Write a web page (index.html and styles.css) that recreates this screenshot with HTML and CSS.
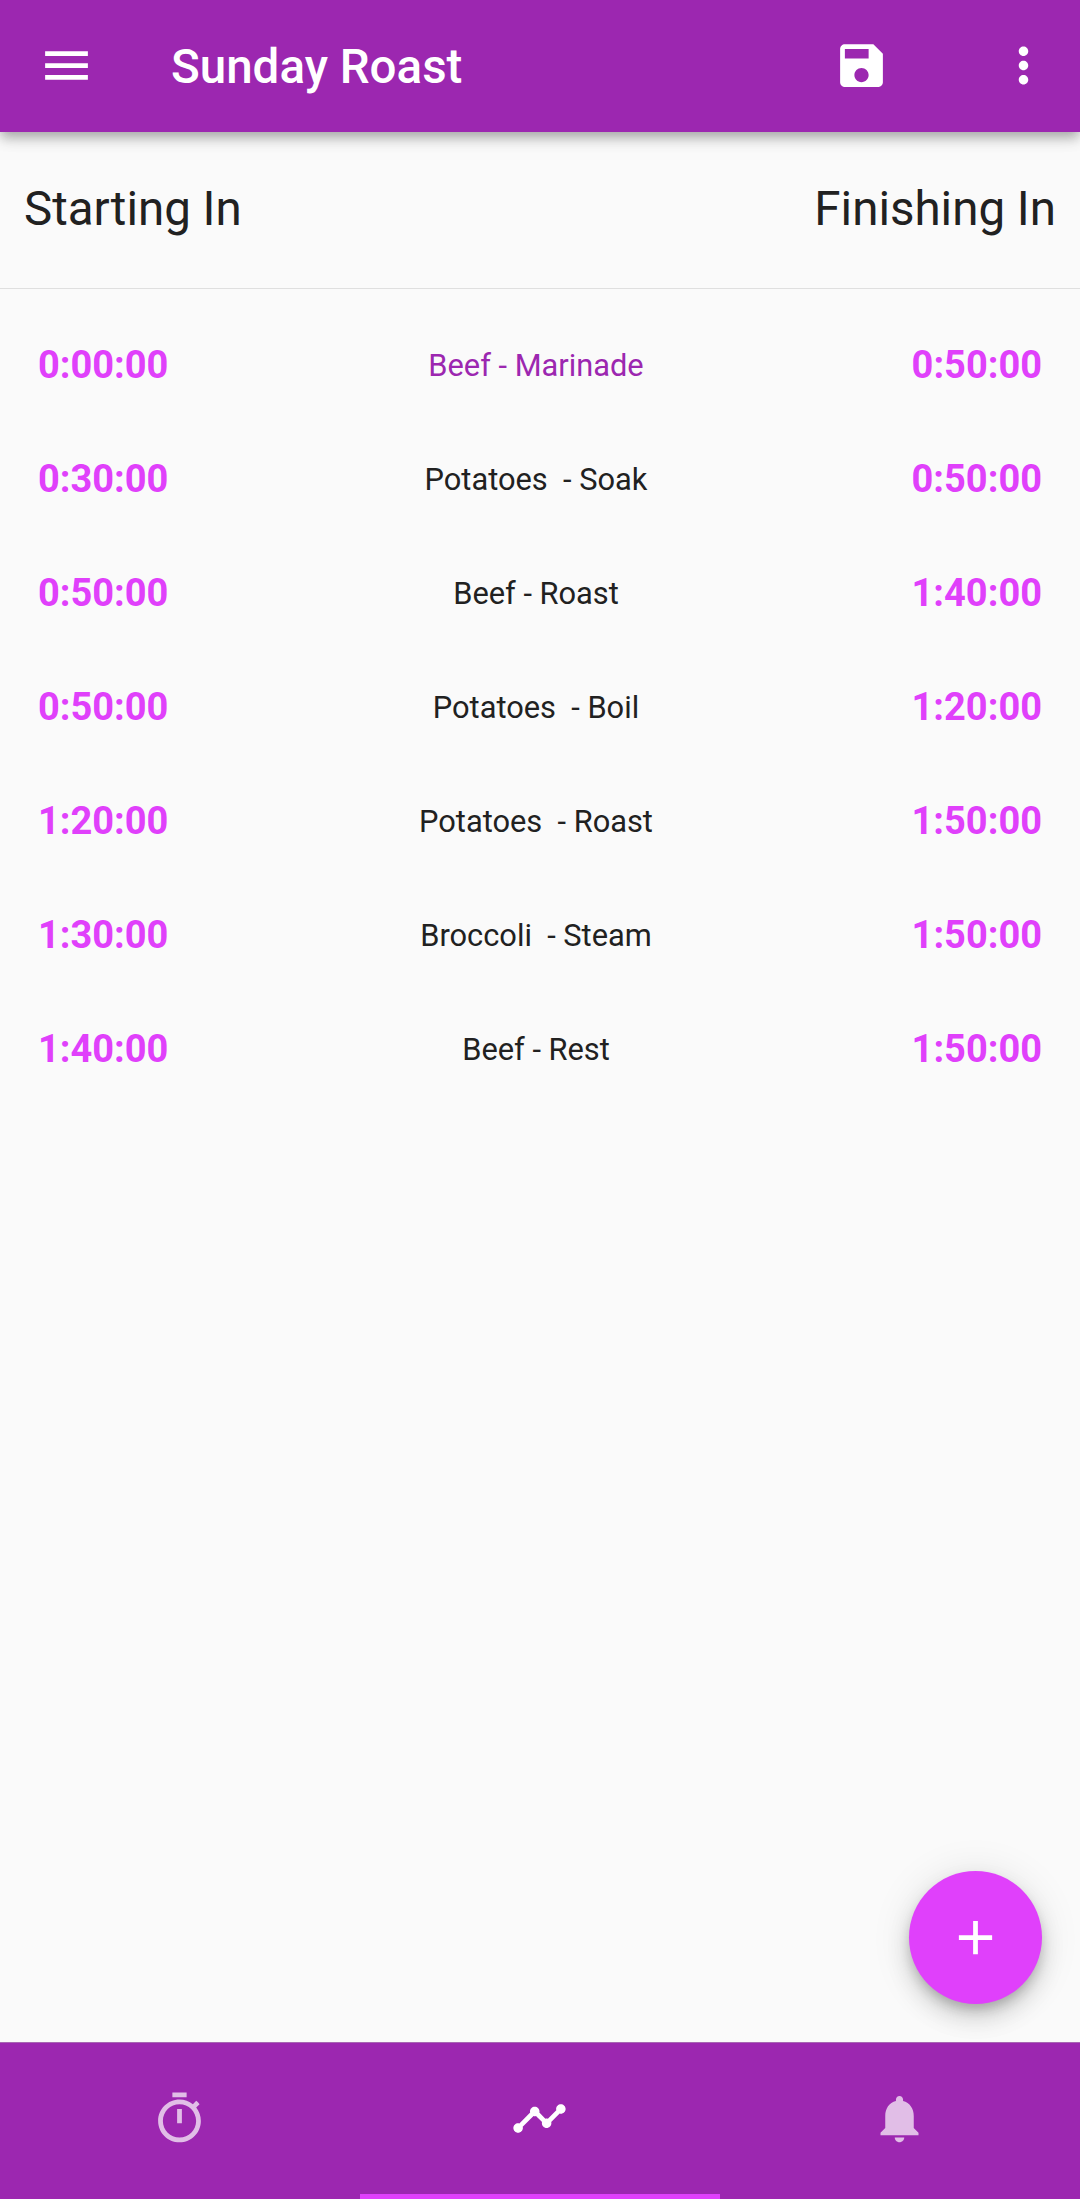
FILE: index.html
```html
<!DOCTYPE html>
<html lang="en">
<head>
<meta charset="utf-8">
<title>Sunday Roast</title>
<link rel="stylesheet" href="styles.css">
</head>
<body>
<div class="app">
  <header class="bar">
    <svg class="icon menu" viewBox="0 0 24 24"><path d="M3 18h18v-2H3v2zm0-5h18v-2H3v2zm0-7v2h18V6H3z"/></svg>
    <h1 class="title">Sunday Roast</h1>
    <svg class="icon save" viewBox="0 0 24 24"><path d="M17 3H5c-1.11 0-2 .9-2 2v14c0 1.1.89 2 2 2h14c1.1 0 2-.9 2-2V7l-4-4zm-5 16c-1.66 0-3-1.34-3-3s1.34-3 3-3 3 1.34 3 3-1.34 3-3 3zm3-10H5V5h10v4z"/></svg>
    <svg class="icon more" viewBox="0 0 24 24"><path d="M12 8c1.1 0 2-.9 2-2s-.9-2-2-2-2 .9-2 2 .9 2 2 2zm0 2c-1.1 0-2 .9-2 2s.9 2 2 2 2-.9 2-2-.9-2-2-2zm0 6c-1.1 0-2 .9-2 2s.9 2 2 2 2-.9 2-2-.9-2-2-2z"/></svg>
  </header>
  <main class="content">
    <div class="heads"><span>Starting In</span><span>Finishing In</span></div>
    <ul class="steps">
      <li class="step"><b>0:00:00</b><span class="name current">Beef - Marinade</span><b>0:50:00</b></li>
      <li class="step"><b>0:30:00</b><span class="name">Potatoes  - Soak</span><b>0:50:00</b></li>
      <li class="step"><b>0:50:00</b><span class="name">Beef - Roast</span><b>1:40:00</b></li>
      <li class="step"><b>0:50:00</b><span class="name">Potatoes  - Boil</span><b>1:20:00</b></li>
      <li class="step"><b>1:20:00</b><span class="name">Potatoes  - Roast</span><b>1:50:00</b></li>
      <li class="step"><b>1:30:00</b><span class="name">Broccoli  - Steam</span><b>1:50:00</b></li>
      <li class="step"><b>1:40:00</b><span class="name">Beef - Rest</span><b>1:50:00</b></li>
    </ul>
    <button class="fab" aria-label="Add"><svg class="icon" viewBox="0 0 24 24"><path d="M19 13h-6v6h-2v-6H5v-2h6V5h2v6h6v2z"/></svg></button>
  </main>
  <nav class="tabs">
    <a class="tab"><svg class="icon" viewBox="0 0 24 24"><path d="M15 1H9v2h6V1zm-4 13h2V8h-2v6zm8.03-6.61l1.42-1.42c-.43-.51-.9-.99-1.41-1.41l-1.42 1.42C16.07 4.74 14.12 4 12 4c-4.97 0-9 4.03-9 9s4.02 9 9 9 9-4.03 9-9c0-2.12-.74-4.07-1.97-5.61zM12 20c-3.87 0-7-3.13-7-7s3.13-7 7-7 7 3.13 7 7-3.13 7-7 7z"/></svg></a>
    <a class="tab active"><svg class="icon" viewBox="0 0 24 24"><path d="M23 8c0 1.1-.9 2-2 2-.18 0-.35-.02-.51-.07l-3.56 3.55c.05.16.07.34.07.52 0 1.1-.9 2-2 2s-2-.9-2-2c0-.18.02-.36.07-.52l-2.55-2.55c-.16.05-.34.07-.52.07s-.36-.02-.52-.07l-4.55 4.56c.05.16.07.33.07.51 0 1.1-.9 2-2 2s-2-.9-2-2 .9-2 2-2c.18 0 .35.02.51.07l4.56-4.55C8.02 9.36 8 9.18 8 9c0-1.1.9-2 2-2s2 .9 2 2c0 .18-.02.36-.07.52l2.55 2.55c.16-.05.34-.07.52-.07s.36.02.52.07l3.55-3.56C19.02 8.35 19 8.18 19 8c0-1.1.9-2 2-2s2 .9 2 2z"/></svg></a>
    <a class="tab"><svg class="icon" viewBox="0 0 24 24"><path d="M12 22c1.1 0 2-.9 2-2h-4c0 1.1.89 2 2 2zm6-6v-5c0-3.07-1.64-5.64-4.5-6.32V4c0-.83-.67-1.5-1.5-1.5s-1.5.67-1.5 1.5v.68C7.63 5.36 6 7.92 6 11v5l-2 2v1h16v-1l-2-2z"/></svg></a>
  </nav>
</div>
</body>
</html>
```
FILE: styles.css
```css
* { box-sizing: border-box; }
body { margin: 0; font-family: Roboto, "Liberation Sans", sans-serif; color: #212121; }
.app { display: flex; flex-direction: column; height: 2199px; background: #fafafa; overflow: hidden; }
.icon { display: block; flex: none; width: 57px; height: 57px; fill: currentColor; }
.bar { display: flex; align-items: center; height: 132px; flex: none; padding: 0 28px 1px 38px; color: #fff; background: #9c27b0; box-shadow: 0 5px 10px -2px rgba(0,0,0,.2), 0 9px 12px rgba(0,0,0,.12), 0 2px 20px rgba(0,0,0,.1); z-index: 1; }
.title { flex: 1; margin: 0 0 0 76px; padding-top: 2px; font-size: 47.5px; font-weight: 500; line-height: 56px; }
.more { margin-left: 105px; }
.content { position: relative; flex: 1; }
.heads { display: flex; justify-content: space-between; height: 157px; padding: 49px 24px 0; border-bottom: 1px solid #dfdfdf; font-size: 47.5px; line-height: 56px; }
.steps { list-style: none; margin: 0; padding: 19px 38px 0; }
.step { display: flex; align-items: center; justify-content: space-between; height: 114px; font-size: 38px; color: #e040fb; }
.name { font-size: 30.8px; color: #212121; white-space: pre; margin-right: 8px; }
.current { color: #9c27b0; }
.fab { position: absolute; right: 38px; bottom: 38px; display: flex; align-items: center; justify-content: center; width: 133px; height: 133px; padding: 0; border: 0; border-radius: 50%; color: #fff; background: #e040fb; box-shadow: 0 7px 12px -2px rgba(0,0,0,.2), 0 14px 24px rgba(0,0,0,.14), 0 2px 40px rgba(0,0,0,.1); }
.tabs { display: flex; flex: none; height: 157px; border-top: 1px solid #a866b3; background: #9c27b0; }
.tab { display: flex; flex: 1; align-items: center; justify-content: center; padding-right: 1px; border-bottom: 5px solid transparent; color: rgba(255,255,255,.7); }
.active { color: #fff; border-color: #e040fb; }
```
